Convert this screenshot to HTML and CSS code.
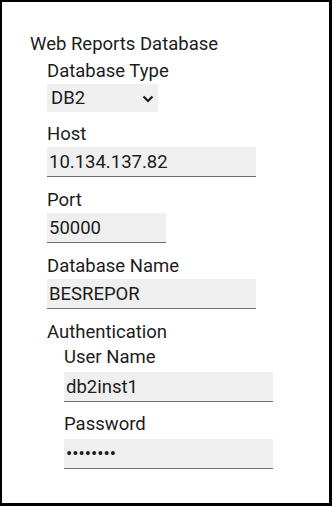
FILE: index.html
```html
<!DOCTYPE html>
<html lang="en">
  <head>
    <meta charset="UTF-8" />
    <title>Web Reports Database</title>
    <link rel="stylesheet" href="styles.css">
  </head>
  <body>
    <div class="panel">
      <div class="section-title">Web Reports Database</div>

      <div class="fields">
        <!-- 数据库类型 -->
        <div class="field first">
          <label class="field-label" for="dbType">Database Type</label>
          <div class="select-wrap">
            <select id="dbType" class="field-select">
              <option>DB2</option>
              <option>SQL Server</option>
            </select>
            <svg class="select-arrow" width="12" height="8" viewBox="0 0 12 8">
              <path d="M1.5 1.5 L6 6 L10.5 1.5" fill="none" stroke="#1c1c1c" stroke-width="2.2" />
            </svg>
          </div>
        </div>

        <div class="field">
          <label class="field-label" for="host">Host</label>
          <input id="host" class="field-input" type="text" value="10.134.137.82" />
        </div>

        <div class="field">
          <label class="field-label" for="port">Port</label>
          <input id="port" class="field-input short" type="text" value="50000" />
        </div>

        <div class="field">
          <label class="field-label" for="dbName">Database Name</label>
          <input id="dbName" class="field-input" type="text" value="BESREPOR" />
        </div>

        <!-- 认证 -->
        <div class="group">
          <div class="group-title">Authentication</div>
          <div class="fields nested">
            <div class="field">
              <label class="field-label" for="user">User Name</label>
              <input id="user" class="field-input" type="text" value="db2inst1" />
            </div>
            <div class="field">
              <label class="field-label" for="pass">Password</label>
              <input id="pass" class="field-input" type="password" value="12345678" />
            </div>
          </div>
        </div>
      </div>
    </div>
  </body>
</html>
```

FILE: styles.css
```css
:root {
  --text: #1c1c1c;
  --field-bg: #efefef;
  --field-line: #6e6e6e;
  --font-size: 18.5px;
}

* {
  margin: 0;
  padding: 0;
  box-sizing: border-box;
}

body {
  font-family: Roboto, "Liberation Sans", sans-serif;
  color: var(--text);
  background: white;
  width: 332px;
  height: 506px;
  overflow: hidden;
}

.panel {
  width: 100%;
  height: 100%;
  border: solid black;
  border-width: 2px 3px 3px 2px;
  padding: 31px 0 0 28px;
}

.section-title {
  font-size: var(--font-size);
  line-height: 22px;
  margin-bottom: 5px;
}

.fields {
  display: flex;
  flex-direction: column;
  gap: 12px;
  padding-left: 17px;
}

.field.first {
  margin-bottom: -1px;
}

.fields.nested {
  gap: 11px;
}

.field {
  display: flex;
  flex-direction: column;
  align-items: flex-start;
  gap: 2px;
}

.nested .field {
  gap: 4px;
}

.field-label {
  font-size: var(--font-size);
  line-height: 22px;
}

/* 下拉框 */
.select-wrap {
  position: relative;
  width: 111px;
  height: 28px;
}

.field-select {
  appearance: none;
  -webkit-appearance: none;
  width: 100%;
  height: 100%;
  border: none;
  border-radius: 0;
  background: var(--field-bg);
  font-family: inherit;
  font-size: var(--font-size);
  color: var(--text);
  padding: 0 0 0 4px;
  outline: none;
}

.select-arrow {
  position: absolute;
  left: 95px;
  top: 11px;
  pointer-events: none;
}

.field-input {
  width: 209px;
  height: 30px;
  border: none;
  border-bottom: 1px solid var(--field-line);
  background: var(--field-bg);
  font-family: inherit;
  font-size: var(--font-size);
  color: var(--text);
  padding: 0 2px;
  outline: none;
}

.field-input.short {
  width: 119px;
}

.group-title {
  font-size: var(--font-size);
  line-height: 22px;
  margin-bottom: 3px;
}
```
